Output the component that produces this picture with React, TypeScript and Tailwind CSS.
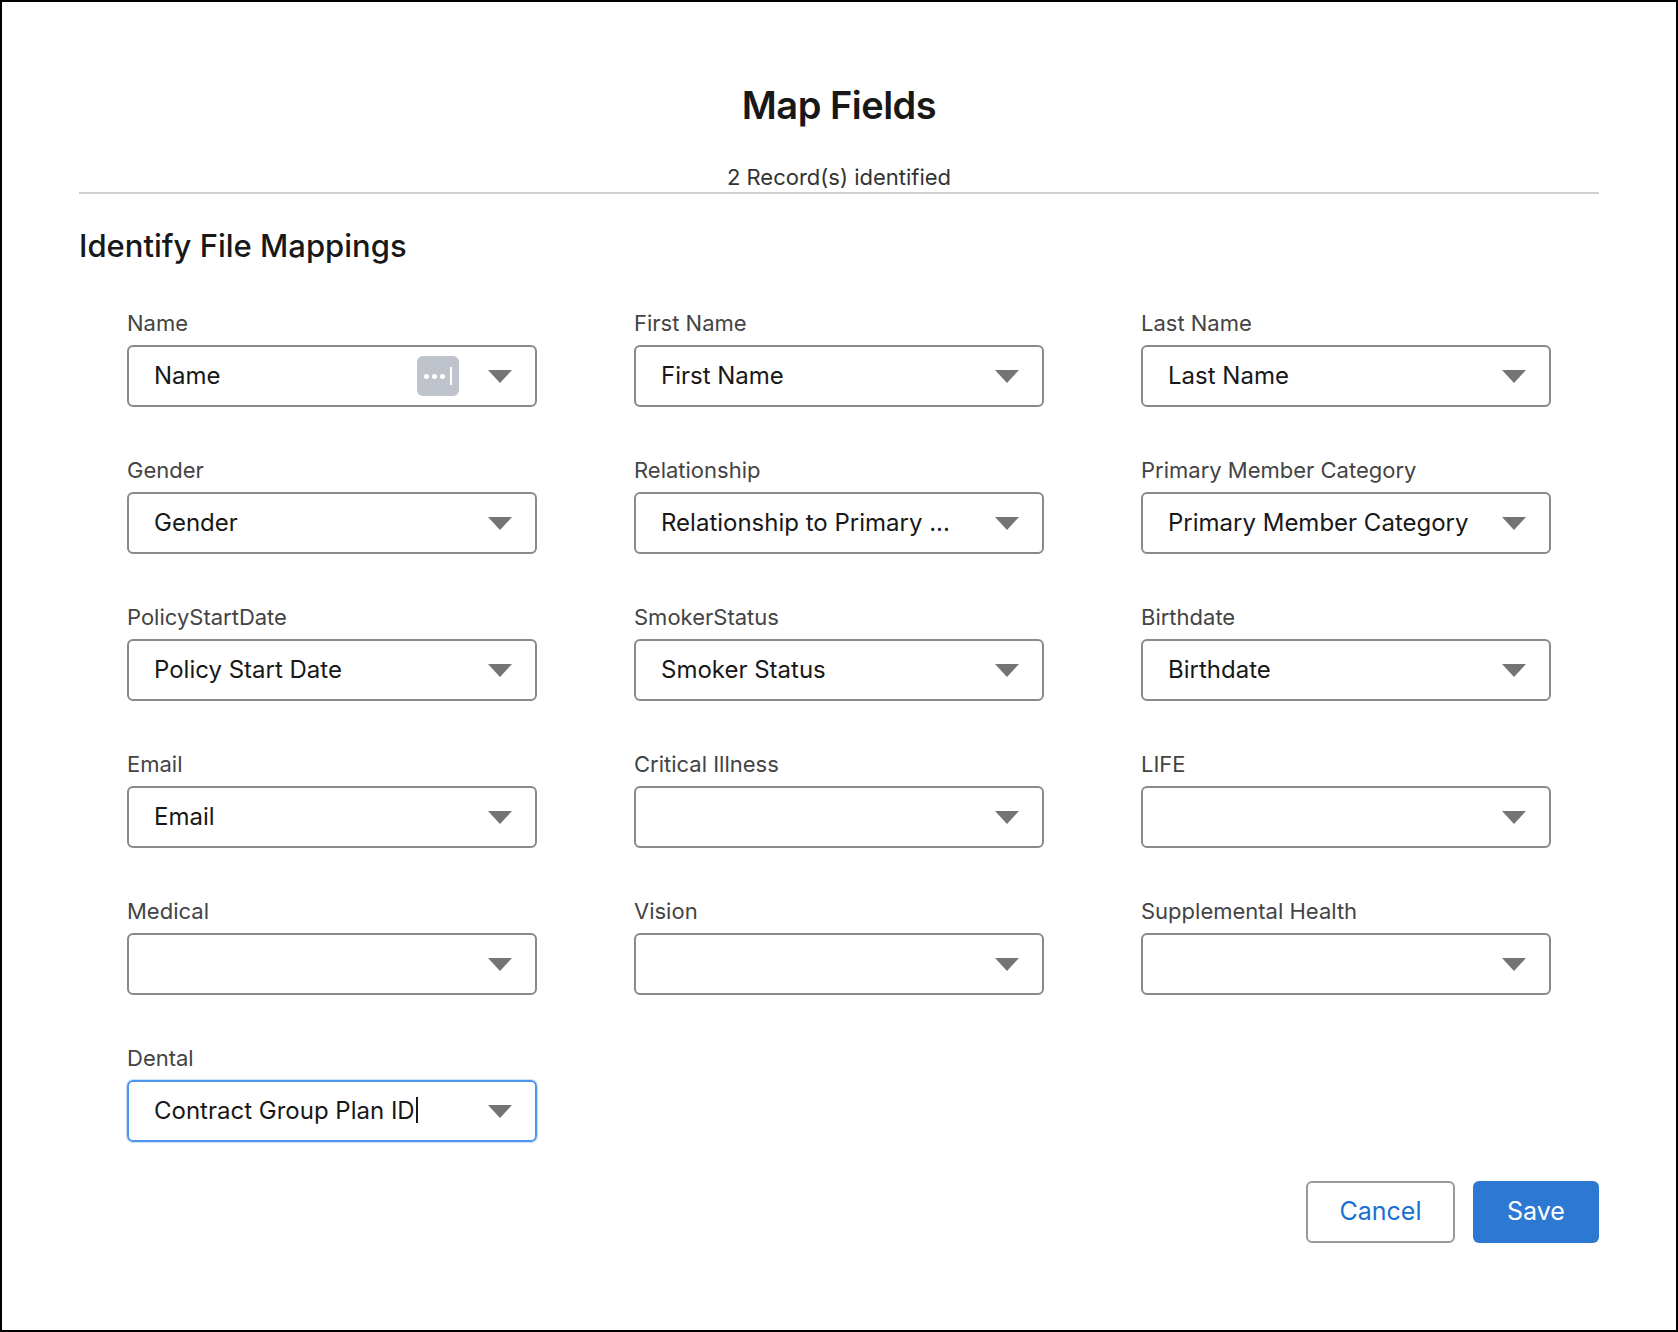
const fields: { label: string; value: string; dots?: boolean; focus?: boolean }[] = [
  { label: 'Name', value: 'Name', dots: true },
  { label: 'First Name', value: 'First Name' },
  { label: 'Last Name', value: 'Last Name' },
  { label: 'Gender', value: 'Gender' },
  { label: 'Relationship', value: 'Relationship to Primary ...' },
  { label: 'Primary Member Category', value: 'Primary Member Category' },
  { label: 'PolicyStartDate', value: 'Policy Start Date' },
  { label: 'SmokerStatus', value: 'Smoker Status' },
  { label: 'Birthdate', value: 'Birthdate' },
  { label: 'Email', value: 'Email' },
  { label: 'Critical Illness', value: '' },
  { label: 'LIFE', value: '' },
  { label: 'Medical', value: '' },
  { label: 'Vision', value: '' },
  { label: 'Supplemental Health', value: '' },
  { label: 'Dental', value: 'Contract Group Plan ID', focus: true },
]

function Caret() {
  return (
    <svg width="26" height="16" viewBox="0 0 26 16" className="shrink-0">
      <path d="M1 2 L25 2 L13 15 Z" fill="#747474" />
    </svg>
  )
}

function Field({ label, value, dots, focus }: (typeof fields)[number]) {
  return (
    <div className="flex flex-col gap-2">
      <div className="text-[22px] leading-[28px] text-[#444]">{label}</div>
      <div
        className={
          focus
            ? 'flex h-[62px] items-center rounded-[6px] border-2 border-[#4f95ee] pl-[25px] pr-[22px] shadow-[0_0_0_1px_#cfe2fb]'
            : 'flex h-[62px] items-center rounded-[6px] border-2 border-[#8a8a8a] pl-[25px] pr-[22px]'
        }
      >
        <span className="flex-1 truncate text-[24px] text-[#181818]">
          {value}
          {focus && <span className="ml-[1px] inline-block h-[26px] w-[2px] translate-y-[4px] bg-[#181818]" />}
        </span>
        {dots && (
          <div className="mr-[28px] flex h-[40px] w-[42px] items-center justify-center gap-[3px] rounded-[6px] bg-[#bfc3cb]">
            <span className="h-[5px] w-[5px] rounded-full bg-white" />
            <span className="h-[5px] w-[5px] rounded-full bg-white" />
            <span className="h-[5px] w-[5px] rounded-full bg-white" />
            <span className="ml-[2px] h-[18px] w-[2px] bg-white" />
          </div>
        )}
        <Caret />
      </div>
    </div>
  )
}

export default function App() {
  return (
    <div
      className="h-[1332px] w-[1678px] border-2 border-black bg-white px-[77px] pt-[80px]"
      style={{ fontFamily: 'Inter, "Noto Sans", sans-serif' }}
    >
      <h1 className="text-center text-[38px] font-semibold leading-[46px] tracking-[-0.5px] text-[#181818]">Map Fields</h1>
      <div className="mt-[35px] border-b-2 border-[#cfcfcf] pb-[1px] text-center text-[22px] leading-[28px] text-[#333]">
        2 Record(s) identified
      </div>
      <h2 className="mt-[33px] text-[31px] font-medium leading-[38px] text-[#181818]">Identify File Mappings</h2>
      <div className="mt-[44px] grid grid-cols-3 gap-x-[97px] gap-y-[49px] px-[48px]">
        {fields.map((f) => (
          <Field key={f.label} {...f} />
        ))}
      </div>
      <div className="mt-[39px] flex justify-end gap-[18px]">
        <button className="h-[62px] w-[149px] rounded-[6px] border-2 border-[#9a9a9a] bg-white text-[25px] text-[#1b6fd1]">
          Cancel
        </button>
        <button className="h-[62px] w-[126px] rounded-[6px] bg-[#2c78d2] text-[25px] text-white">Save</button>
      </div>
    </div>
  )
}
